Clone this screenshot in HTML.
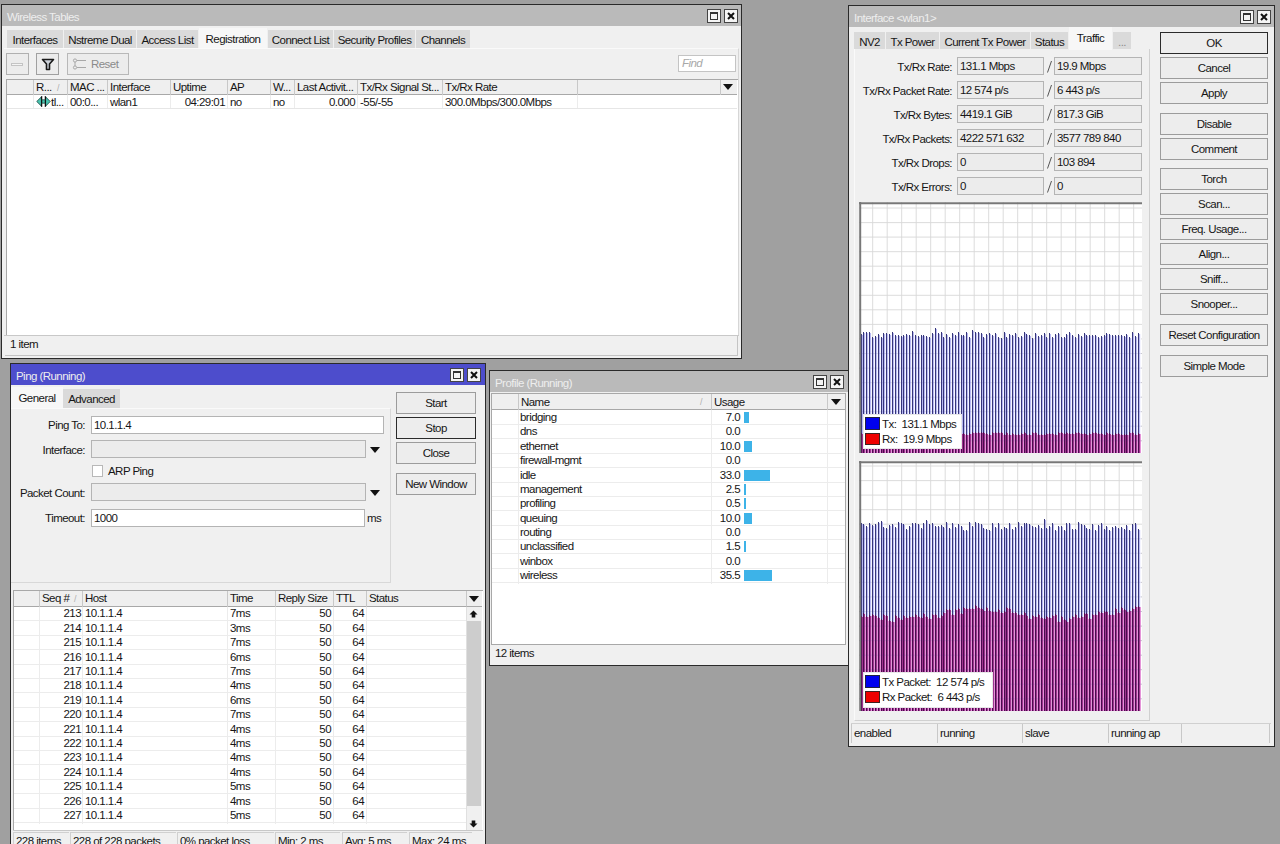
<!DOCTYPE html><html><head><meta charset="utf-8"><style>
html,body{margin:0;padding:0;}
body{width:1280px;height:844px;position:relative;overflow:hidden;background:#a0a0a0;font-family:"Liberation Sans", sans-serif;font-size:11.5px;color:#161616;}
.b{position:absolute;box-sizing:border-box;}
.t{position:absolute;white-space:nowrap;line-height:13px;letter-spacing:-0.55px;}
.wt{color:#eeeeee;}
.gt{color:#8a8a8a;}
</style></head><body>

<div class="b" style="left:1px;top:4px;width:741px;height:355px;background:#f0f0f0;border:1px solid #2a2a2a;"></div>
<div class="b" style="left:2px;top:5px;width:739px;height:21px;background:#bababa;"></div>
<div class="t wt" style="left:7px;top:11px;">Wireless Tables</div>
<div class="b" style="left:707px;top:9px;width:14px;height:14px;background:#f4f4f4;border:1px solid #444;"></div>
<div class="b" style="left:710px;top:12px;width:8px;height:8px;border:1px solid #333;border-top-width:2px;"></div>
<div class="b" style="left:724px;top:9px;width:14px;height:14px;background:#f4f4f4;border:1px solid #444;"></div>
<svg class="b" style="left:724px;top:9px" width="14" height="14"><path d="M4 4L10 10M10 4L4 10" stroke="#111" stroke-width="2"/></svg>
<div class="b" style="left:7px;top:30px;width:56px;height:18px;background:#dadada;"></div>
<div class="t " style="left:2.0px;width:66px;top:34px;text-align:center;">Interfaces</div>
<div class="b" style="left:64px;top:30px;width:72px;height:18px;background:#dadada;"></div>
<div class="t " style="left:59.0px;width:82px;top:34px;text-align:center;">Nstreme Dual</div>
<div class="b" style="left:137px;top:30px;width:61px;height:18px;background:#dadada;"></div>
<div class="t " style="left:132.0px;width:71px;top:34px;text-align:center;">Access List</div>
<div class="b" style="left:199px;top:28px;width:68px;height:21px;background:#f7f7f7;"></div>
<div class="t " style="left:194.0px;width:78px;top:33px;text-align:center;">Registration</div>
<div class="b" style="left:268px;top:30px;width:65px;height:18px;background:#dadada;"></div>
<div class="t " style="left:263.0px;width:75px;top:34px;text-align:center;">Connect List</div>
<div class="b" style="left:334px;top:30px;width:81px;height:18px;background:#dadada;"></div>
<div class="t " style="left:329.0px;width:91px;top:34px;text-align:center;">Security Profiles</div>
<div class="b" style="left:416px;top:30px;width:54px;height:18px;background:#dadada;"></div>
<div class="t " style="left:411.0px;width:64px;top:34px;text-align:center;">Channels</div>
<div class="b" style="left:4px;top:48px;width:735px;height:288px;border-top:1px solid #fafafa;border-right:1px solid #d6d6d6;"></div>
<div class="b" style="left:6px;top:53px;width:23px;height:22px;background:#ececec;border:1px solid #b0b0b0;"></div>
<div class="b" style="left:11px;top:63px;width:12px;height:3px;border:1px solid #c4c4c4;background:#f4f4f4;"></div>
<div class="b" style="left:36px;top:53px;width:23px;height:22px;background:#ececec;border:1px solid #a0a0a0;"></div>
<svg class="b" style="left:40px;top:56px" width="16" height="16"><path d="M2.5 3.5H13.5L9.5 8V13.5H6.5V8Z" fill="#cfd4dc" stroke="#1a1a1a" stroke-width="1.6" stroke-linejoin="round"/></svg>
<div class="b" style="left:67px;top:53px;width:62px;height:22px;background:#ececec;border:1px solid #b8b8b8;"></div>
<svg class="b" style="left:72px;top:57px" width="16" height="14"><g fill="none" stroke="#a8a8a8" stroke-width="1"><circle cx="3" cy="3.5" r="1.6"/><circle cx="3" cy="10.5" r="1.6"/><path d="M3 5V9M5 3.5H14M5 10.5H14"/></g></svg>
<div class="t gt" style="left:91px;top:58px;">Reset</div>
<div class="b" style="left:678px;top:55px;width:58px;height:17px;background:#fff;border:1px solid #c4c4c4;"></div>
<div class="t gt" style="left:682px;top:57px;color:#a8a8a8"><i>Find</i></div>
<div class="b" style="left:6px;top:79px;width:732px;height:256px;background:#fff;border-left:1px solid #a8a8a8;border-top:1px solid #a8a8a8;"></div>
<div class="b" style="left:7px;top:80px;width:730px;height:15px;background:#efefef;border-bottom:1px solid #a8a8a8;"></div>
<div class="b" style="left:33px;top:80px;width:1px;height:15px;background:#c8c8c8;"></div>
<div class="b" style="left:67px;top:80px;width:1px;height:15px;background:#c8c8c8;"></div>
<div class="b" style="left:107px;top:80px;width:1px;height:15px;background:#c8c8c8;"></div>
<div class="b" style="left:170px;top:80px;width:1px;height:15px;background:#c8c8c8;"></div>
<div class="b" style="left:227px;top:80px;width:1px;height:15px;background:#c8c8c8;"></div>
<div class="b" style="left:270px;top:80px;width:1px;height:15px;background:#c8c8c8;"></div>
<div class="b" style="left:294px;top:80px;width:1px;height:15px;background:#c8c8c8;"></div>
<div class="b" style="left:357px;top:80px;width:1px;height:15px;background:#c8c8c8;"></div>
<div class="b" style="left:442px;top:80px;width:1px;height:15px;background:#c8c8c8;"></div>
<div class="b" style="left:577px;top:80px;width:1px;height:15px;background:#c8c8c8;"></div>
<div class="b" style="left:720px;top:80px;width:1px;height:15px;background:#c8c8c8;"></div>
<div class="b" style="left:33px;top:95px;width:1px;height:14px;background:#ececec;"></div>
<div class="b" style="left:67px;top:95px;width:1px;height:14px;background:#ececec;"></div>
<div class="b" style="left:107px;top:95px;width:1px;height:14px;background:#ececec;"></div>
<div class="b" style="left:170px;top:95px;width:1px;height:14px;background:#ececec;"></div>
<div class="b" style="left:227px;top:95px;width:1px;height:14px;background:#ececec;"></div>
<div class="b" style="left:270px;top:95px;width:1px;height:14px;background:#ececec;"></div>
<div class="b" style="left:294px;top:95px;width:1px;height:14px;background:#ececec;"></div>
<div class="b" style="left:357px;top:95px;width:1px;height:14px;background:#ececec;"></div>
<div class="b" style="left:442px;top:95px;width:1px;height:14px;background:#ececec;"></div>
<div class="b" style="left:577px;top:95px;width:1px;height:14px;background:#ececec;"></div>
<div class="b" style="left:7px;top:108px;width:730px;height:1px;background:#e6e6e6;"></div>
<div class="t " style="left:36px;top:81px;">R... </div>
<div class="t " style="left:70px;top:81px;">MAC ...</div>
<div class="t " style="left:110px;top:81px;">Interface</div>
<div class="t " style="left:173px;top:81px;">Uptime</div>
<div class="t " style="left:230px;top:81px;">AP</div>
<div class="t " style="left:273px;top:81px;">W...</div>
<div class="t " style="left:297px;top:81px;">Last Activit...</div>
<div class="t " style="left:360px;top:81px;">Tx/Rx Signal St...</div>
<div class="t " style="left:445px;top:81px;">Tx/Rx Rate</div>
<div class="t gt" style="left:57px;top:82px;font-size:9px;color:#b0b0b0">/</div>
<svg class="b" style="left:722px;top:83px" width="12" height="8"><path d="M1 1H11L6 7Z" fill="#111"/></svg>
<svg class="b" style="left:36px;top:95px" width="15" height="13"><path d="M0.8 6.5L5.5 1.8V11.2ZM14.2 6.5L9.5 1.8V11.2Z" fill="#48c4b0" stroke="#1c5048" stroke-width="0.9" stroke-linejoin="round"/><rect x="5.5" y="4.8" width="4" height="3.4" fill="#48c4b0"/><path d="M5.6 1.2V11.8M9.4 1.2V11.8" stroke="#111" stroke-width="1.3"/><path d="M5.6 4.8H9.4M5.6 8.2H9.4" stroke="#1c5048" stroke-width="0.8"/></svg>
<div class="t " style="left:51px;top:96px;">tl...</div>
<div class="t " style="left:70px;top:96px;">00:0...</div>
<div class="t " style="left:110px;top:96px;">wlan1</div>
<div class="t " style="right:1055px;top:96px;text-align:right;">04:29:01</div>
<div class="t " style="left:230px;top:96px;">no</div>
<div class="t " style="left:273px;top:96px;">no</div>
<div class="t " style="right:925px;top:96px;text-align:right;">0.000</div>
<div class="t " style="left:360px;top:96px;">-55/-55</div>
<div class="t " style="left:445px;top:96px;">300.0Mbps/300.0Mbps</div>
<div class="b" style="left:4px;top:335px;width:735px;height:1px;background:#c8c8c8;"></div>
<div class="b" style="left:5px;top:336px;width:733px;height:20px;border-bottom:1px solid #c4c4c4;border-right:1px solid #c4c4c4;"></div>
<div class="t " style="left:10px;top:338px;">1 item</div>
<div class="b" style="left:489px;top:370px;width:360px;height:296px;background:#f0f0f0;border:1px solid #2a2a2a;"></div>
<div class="b" style="left:490px;top:371px;width:358px;height:21px;background:#bababa;"></div>
<div class="t wt" style="left:495px;top:377px;">Profile (Running)</div>
<div class="b" style="left:813px;top:375px;width:14px;height:14px;background:#f4f4f4;border:1px solid #444;"></div>
<div class="b" style="left:816px;top:378px;width:8px;height:8px;border:1px solid #333;border-top-width:2px;"></div>
<div class="b" style="left:830px;top:375px;width:14px;height:14px;background:#f4f4f4;border:1px solid #444;"></div>
<svg class="b" style="left:830px;top:375px" width="14" height="14"><path d="M4 4L10 10M10 4L4 10" stroke="#111" stroke-width="2"/></svg>
<div class="b" style="left:491px;top:393px;width:355px;height:252px;background:#fff;border:1px solid #a8a8a8;"></div>
<div class="b" style="left:492px;top:394px;width:353px;height:16px;background:#efefef;border-bottom:1px solid #a8a8a8;"></div>
<div class="b" style="left:518px;top:394px;width:1px;height:16px;background:#c8c8c8;"></div>
<div class="b" style="left:711px;top:394px;width:1px;height:16px;background:#c8c8c8;"></div>
<div class="b" style="left:827px;top:394px;width:1px;height:16px;background:#c8c8c8;"></div>
<div class="t " style="left:521px;top:396px;">Name</div>
<div class="t gt" style="left:700px;top:396px;font-size:9px;color:#b0b0b0">/</div>
<div class="t " style="left:714px;top:396px;">Usage</div>
<svg class="b" style="left:830px;top:398px" width="12" height="8"><path d="M1 1H11L6 7Z" fill="#111"/></svg>
<div class="b" style="left:492px;top:424.0px;width:353px;height:1.0px;background:#ececec;"></div>
<div class="t " style="left:520px;top:411.0px;">bridging</div>
<div class="t " style="right:540px;top:411.0px;text-align:right;">7.0</div>
<div class="b" style="left:744px;top:412.0px;width:4.5px;height:11.0px;background:#3db3e8;"></div>
<div class="b" style="left:492px;top:438.38px;width:353px;height:1.0px;background:#ececec;"></div>
<div class="t " style="left:520px;top:425.38px;">dns</div>
<div class="t " style="right:540px;top:425.38px;text-align:right;">0.0</div>
<div class="b" style="left:492px;top:452.76px;width:353px;height:1.0px;background:#ececec;"></div>
<div class="t " style="left:520px;top:439.76px;">ethernet</div>
<div class="t " style="right:540px;top:439.76px;text-align:right;">10.0</div>
<div class="b" style="left:744px;top:440.76px;width:7.600000000000023px;height:11.0px;background:#3db3e8;"></div>
<div class="b" style="left:492px;top:467.14px;width:353px;height:1.0px;background:#ececec;"></div>
<div class="t " style="left:520px;top:454.14px;">firewall-mgmt</div>
<div class="t " style="right:540px;top:454.14px;text-align:right;">0.0</div>
<div class="b" style="left:492px;top:481.52px;width:353px;height:1.0px;background:#ececec;"></div>
<div class="t " style="left:520px;top:468.52px;">idle</div>
<div class="t " style="right:540px;top:468.52px;text-align:right;">33.0</div>
<div class="b" style="left:744px;top:469.52px;width:26px;height:11.0px;background:#3db3e8;"></div>
<div class="b" style="left:492px;top:495.9px;width:353px;height:1.0px;background:#ececec;"></div>
<div class="t " style="left:520px;top:482.9px;">management</div>
<div class="t " style="right:540px;top:482.9px;text-align:right;">2.5</div>
<div class="b" style="left:744px;top:483.9px;width:2px;height:11.0px;background:#3db3e8;"></div>
<div class="b" style="left:492px;top:510.28px;width:353px;height:1.0px;background:#ececec;"></div>
<div class="t " style="left:520px;top:497.28px;">profiling</div>
<div class="t " style="right:540px;top:497.28px;text-align:right;">0.5</div>
<div class="b" style="left:744px;top:498.28px;width:2px;height:11.0px;background:#3db3e8;"></div>
<div class="b" style="left:492px;top:524.6600000000001px;width:353px;height:1.0px;background:#ececec;"></div>
<div class="t " style="left:520px;top:511.6600000000001px;">queuing</div>
<div class="t " style="right:540px;top:511.6600000000001px;text-align:right;">10.0</div>
<div class="b" style="left:744px;top:512.6600000000001px;width:7.600000000000023px;height:11.0px;background:#3db3e8;"></div>
<div class="b" style="left:492px;top:539.04px;width:353px;height:1.0px;background:#ececec;"></div>
<div class="t " style="left:520px;top:526.04px;">routing</div>
<div class="t " style="right:540px;top:526.04px;text-align:right;">0.0</div>
<div class="b" style="left:492px;top:553.4200000000001px;width:353px;height:1.0px;background:#ececec;"></div>
<div class="t " style="left:520px;top:540.4200000000001px;">unclassified</div>
<div class="t " style="right:540px;top:540.4200000000001px;text-align:right;">1.5</div>
<div class="b" style="left:744px;top:541.4200000000001px;width:2px;height:11.0px;background:#3db3e8;"></div>
<div class="b" style="left:492px;top:567.8px;width:353px;height:1.0px;background:#ececec;"></div>
<div class="t " style="left:520px;top:554.8px;">winbox</div>
<div class="t " style="right:540px;top:554.8px;text-align:right;">0.0</div>
<div class="b" style="left:492px;top:582.1800000000001px;width:353px;height:1.0px;background:#ececec;"></div>
<div class="t " style="left:520px;top:569.1800000000001px;">wireless</div>
<div class="t " style="right:540px;top:569.1800000000001px;text-align:right;">35.5</div>
<div class="b" style="left:744px;top:570.1800000000001px;width:28px;height:11.0px;background:#3db3e8;"></div>
<div class="b" style="left:518px;top:410px;width:1px;height:174px;background:#ececec;"></div>
<div class="b" style="left:711px;top:410px;width:1px;height:174px;background:#ececec;"></div>
<div class="b" style="left:827px;top:410px;width:1px;height:174px;background:#ececec;"></div>
<div class="t " style="left:495px;top:647px;">12 items</div>
<div class="b" style="left:10px;top:363px;width:476px;height:537px;background:#f0f0f0;border:1px solid #2a2a2a;"></div>
<div class="b" style="left:11px;top:364px;width:474px;height:21px;background:#4d4dcc;"></div>
<div class="t wt" style="left:16px;top:370px;">Ping (Running)</div>
<div class="b" style="left:450px;top:368px;width:14px;height:14px;background:#f4f4f4;border:1px solid #444;"></div>
<div class="b" style="left:453px;top:371px;width:8px;height:8px;border:1px solid #333;border-top-width:2px;"></div>
<div class="b" style="left:467px;top:368px;width:14px;height:14px;background:#f4f4f4;border:1px solid #444;"></div>
<svg class="b" style="left:467px;top:368px" width="14" height="14"><path d="M4 4L10 10M10 4L4 10" stroke="#111" stroke-width="2"/></svg>
<div class="b" style="left:11px;top:387px;width:52px;height:22px;background:#f7f7f7;"></div>
<div class="t " style="left:6.0px;width:62px;top:392px;text-align:center;">General</div>
<div class="b" style="left:63px;top:389px;width:57px;height:19px;background:#dadada;"></div>
<div class="t " style="left:58.0px;width:67px;top:393px;text-align:center;">Advanced</div>
<div class="b" style="left:11px;top:408px;width:380px;height:175px;border-right:1px solid #d8d8d8;border-bottom:1px solid #d8d8d8;border-top:1px solid #fafafa;"></div>
<div class="t " style="right:1195px;top:419px;text-align:right;">Ping To:</div>
<div class="b" style="left:91px;top:416px;width:293px;height:18px;background:#ffffff;border:1px solid #b4b4b4;"></div>
<div class="t " style="left:94px;top:419px;">10.1.1.4</div>
<div class="t " style="right:1195px;top:444px;text-align:right;">Interface:</div>
<div class="b" style="left:91px;top:440px;width:275px;height:18px;background:#ececec;border:1px solid #b4b4b4;"></div>
<svg class="b" style="left:369px;top:446px" width="12" height="8"><path d="M1 1H11L6 7Z" fill="#111"/></svg>
<div class="b" style="left:92px;top:465px;width:11px;height:12px;background:#fff;border:1px solid #b8b8b8;"></div>
<div class="t " style="left:108px;top:465px;">ARP Ping</div>
<div class="t " style="right:1195px;top:487px;text-align:right;">Packet Count:</div>
<div class="b" style="left:91px;top:483px;width:275px;height:18px;background:#ececec;border:1px solid #b4b4b4;"></div>
<svg class="b" style="left:369px;top:489px" width="12" height="8"><path d="M1 1H11L6 7Z" fill="#111"/></svg>
<div class="t " style="right:1195px;top:512px;text-align:right;">Timeout:</div>
<div class="b" style="left:91px;top:509px;width:274px;height:18px;background:#ffffff;border:1px solid #b4b4b4;"></div>
<div class="t " style="left:94px;top:512px;">1000</div>
<div class="t " style="left:367px;top:512px;">ms</div>
<div class="b" style="left:396px;top:392px;width:80px;height:22px;background:#ededed;border:1px solid #9c9c9c;"></div>
<div class="t " style="left:396.0px;width:80px;top:397px;text-align:center;">Start</div>
<div class="b" style="left:396px;top:417px;width:80px;height:22px;background:#ededed;border:1px solid #2b2b2b;"></div>
<div class="t " style="left:396.0px;width:80px;top:422px;text-align:center;">Stop</div>
<div class="b" style="left:396px;top:442px;width:80px;height:22px;background:#ededed;border:1px solid #9c9c9c;"></div>
<div class="t " style="left:396.0px;width:80px;top:447px;text-align:center;">Close</div>
<div class="b" style="left:396px;top:473px;width:80px;height:22px;background:#ededed;border:1px solid #9c9c9c;"></div>
<div class="t " style="left:396.0px;width:80px;top:478px;text-align:center;">New Window</div>
<div class="b" style="left:13px;top:590px;width:470px;height:241px;background:#fff;border-left:1px solid #a8a8a8;border-top:1px solid #a8a8a8;"></div>
<div class="b" style="left:14px;top:591px;width:452px;height:16px;background:#efefef;border-bottom:1px solid #a8a8a8;"></div>
<div class="b" style="left:466px;top:591px;width:16px;height:16px;background:#efefef;border-bottom:1px solid #a8a8a8;border-left:1px solid #c8c8c8;"></div>
<div class="b" style="left:39px;top:591px;width:1px;height:16px;background:#c8c8c8;"></div>
<div class="b" style="left:82px;top:591px;width:1px;height:16px;background:#c8c8c8;"></div>
<div class="b" style="left:227px;top:591px;width:1px;height:16px;background:#c8c8c8;"></div>
<div class="b" style="left:275px;top:591px;width:1px;height:16px;background:#c8c8c8;"></div>
<div class="b" style="left:333px;top:591px;width:1px;height:16px;background:#c8c8c8;"></div>
<div class="b" style="left:366px;top:591px;width:1px;height:16px;background:#c8c8c8;"></div>
<div class="t " style="left:42px;top:592px;">Seq #</div>
<div class="t gt" style="left:74px;top:593px;font-size:9px;color:#b0b0b0">/</div>
<div class="t " style="left:85px;top:592px;">Host</div>
<div class="t " style="left:230px;top:592px;">Time</div>
<div class="t " style="left:278px;top:592px;">Reply Size</div>
<div class="t " style="left:336px;top:592px;">TTL</div>
<div class="t " style="left:369px;top:592px;">Status</div>
<svg class="b" style="left:468px;top:595px" width="12" height="8"><path d="M1 1H11L6 7Z" fill="#111"/></svg>
<div class="b" style="left:14px;top:620.3px;width:452px;height:1.0px;background:#ececec;"></div>
<div class="t " style="right:1199px;top:607.3px;text-align:right;">213</div>
<div class="t " style="left:85px;top:607.3px;">10.1.1.4</div>
<div class="t " style="left:230px;top:607.3px;">7ms</div>
<div class="t " style="right:949px;top:607.3px;text-align:right;">50</div>
<div class="t " style="right:916px;top:607.3px;text-align:right;">64</div>
<div class="b" style="left:14px;top:634.6999999999999px;width:452px;height:1.0px;background:#ececec;"></div>
<div class="t " style="right:1199px;top:621.6999999999999px;text-align:right;">214</div>
<div class="t " style="left:85px;top:621.6999999999999px;">10.1.1.4</div>
<div class="t " style="left:230px;top:621.6999999999999px;">3ms</div>
<div class="t " style="right:949px;top:621.6999999999999px;text-align:right;">50</div>
<div class="t " style="right:916px;top:621.6999999999999px;text-align:right;">64</div>
<div class="b" style="left:14px;top:649.0999999999999px;width:452px;height:1.0px;background:#ececec;"></div>
<div class="t " style="right:1199px;top:636.0999999999999px;text-align:right;">215</div>
<div class="t " style="left:85px;top:636.0999999999999px;">10.1.1.4</div>
<div class="t " style="left:230px;top:636.0999999999999px;">7ms</div>
<div class="t " style="right:949px;top:636.0999999999999px;text-align:right;">50</div>
<div class="t " style="right:916px;top:636.0999999999999px;text-align:right;">64</div>
<div class="b" style="left:14px;top:663.5px;width:452px;height:1.0px;background:#ececec;"></div>
<div class="t " style="right:1199px;top:650.5px;text-align:right;">216</div>
<div class="t " style="left:85px;top:650.5px;">10.1.1.4</div>
<div class="t " style="left:230px;top:650.5px;">6ms</div>
<div class="t " style="right:949px;top:650.5px;text-align:right;">50</div>
<div class="t " style="right:916px;top:650.5px;text-align:right;">64</div>
<div class="b" style="left:14px;top:677.9px;width:452px;height:1.0px;background:#ececec;"></div>
<div class="t " style="right:1199px;top:664.9px;text-align:right;">217</div>
<div class="t " style="left:85px;top:664.9px;">10.1.1.4</div>
<div class="t " style="left:230px;top:664.9px;">7ms</div>
<div class="t " style="right:949px;top:664.9px;text-align:right;">50</div>
<div class="t " style="right:916px;top:664.9px;text-align:right;">64</div>
<div class="b" style="left:14px;top:692.3px;width:452px;height:1.0px;background:#ececec;"></div>
<div class="t " style="right:1199px;top:679.3px;text-align:right;">218</div>
<div class="t " style="left:85px;top:679.3px;">10.1.1.4</div>
<div class="t " style="left:230px;top:679.3px;">4ms</div>
<div class="t " style="right:949px;top:679.3px;text-align:right;">50</div>
<div class="t " style="right:916px;top:679.3px;text-align:right;">64</div>
<div class="b" style="left:14px;top:706.6999999999999px;width:452px;height:1.0px;background:#ececec;"></div>
<div class="t " style="right:1199px;top:693.6999999999999px;text-align:right;">219</div>
<div class="t " style="left:85px;top:693.6999999999999px;">10.1.1.4</div>
<div class="t " style="left:230px;top:693.6999999999999px;">6ms</div>
<div class="t " style="right:949px;top:693.6999999999999px;text-align:right;">50</div>
<div class="t " style="right:916px;top:693.6999999999999px;text-align:right;">64</div>
<div class="b" style="left:14px;top:721.0999999999999px;width:452px;height:1.0px;background:#ececec;"></div>
<div class="t " style="right:1199px;top:708.0999999999999px;text-align:right;">220</div>
<div class="t " style="left:85px;top:708.0999999999999px;">10.1.1.4</div>
<div class="t " style="left:230px;top:708.0999999999999px;">7ms</div>
<div class="t " style="right:949px;top:708.0999999999999px;text-align:right;">50</div>
<div class="t " style="right:916px;top:708.0999999999999px;text-align:right;">64</div>
<div class="b" style="left:14px;top:735.5px;width:452px;height:1.0px;background:#ececec;"></div>
<div class="t " style="right:1199px;top:722.5px;text-align:right;">221</div>
<div class="t " style="left:85px;top:722.5px;">10.1.1.4</div>
<div class="t " style="left:230px;top:722.5px;">4ms</div>
<div class="t " style="right:949px;top:722.5px;text-align:right;">50</div>
<div class="t " style="right:916px;top:722.5px;text-align:right;">64</div>
<div class="b" style="left:14px;top:749.9px;width:452px;height:1.0px;background:#ececec;"></div>
<div class="t " style="right:1199px;top:736.9px;text-align:right;">222</div>
<div class="t " style="left:85px;top:736.9px;">10.1.1.4</div>
<div class="t " style="left:230px;top:736.9px;">4ms</div>
<div class="t " style="right:949px;top:736.9px;text-align:right;">50</div>
<div class="t " style="right:916px;top:736.9px;text-align:right;">64</div>
<div class="b" style="left:14px;top:764.3px;width:452px;height:1.0px;background:#ececec;"></div>
<div class="t " style="right:1199px;top:751.3px;text-align:right;">223</div>
<div class="t " style="left:85px;top:751.3px;">10.1.1.4</div>
<div class="t " style="left:230px;top:751.3px;">4ms</div>
<div class="t " style="right:949px;top:751.3px;text-align:right;">50</div>
<div class="t " style="right:916px;top:751.3px;text-align:right;">64</div>
<div class="b" style="left:14px;top:778.6999999999999px;width:452px;height:1.0px;background:#ececec;"></div>
<div class="t " style="right:1199px;top:765.6999999999999px;text-align:right;">224</div>
<div class="t " style="left:85px;top:765.6999999999999px;">10.1.1.4</div>
<div class="t " style="left:230px;top:765.6999999999999px;">4ms</div>
<div class="t " style="right:949px;top:765.6999999999999px;text-align:right;">50</div>
<div class="t " style="right:916px;top:765.6999999999999px;text-align:right;">64</div>
<div class="b" style="left:14px;top:793.0999999999999px;width:452px;height:1.0px;background:#ececec;"></div>
<div class="t " style="right:1199px;top:780.0999999999999px;text-align:right;">225</div>
<div class="t " style="left:85px;top:780.0999999999999px;">10.1.1.4</div>
<div class="t " style="left:230px;top:780.0999999999999px;">5ms</div>
<div class="t " style="right:949px;top:780.0999999999999px;text-align:right;">50</div>
<div class="t " style="right:916px;top:780.0999999999999px;text-align:right;">64</div>
<div class="b" style="left:14px;top:807.5px;width:452px;height:1.0px;background:#ececec;"></div>
<div class="t " style="right:1199px;top:794.5px;text-align:right;">226</div>
<div class="t " style="left:85px;top:794.5px;">10.1.1.4</div>
<div class="t " style="left:230px;top:794.5px;">4ms</div>
<div class="t " style="right:949px;top:794.5px;text-align:right;">50</div>
<div class="t " style="right:916px;top:794.5px;text-align:right;">64</div>
<div class="b" style="left:14px;top:821.9px;width:452px;height:1.0px;background:#ececec;"></div>
<div class="t " style="right:1199px;top:808.9px;text-align:right;">227</div>
<div class="t " style="left:85px;top:808.9px;">10.1.1.4</div>
<div class="t " style="left:230px;top:808.9px;">5ms</div>
<div class="t " style="right:949px;top:808.9px;text-align:right;">50</div>
<div class="t " style="right:916px;top:808.9px;text-align:right;">64</div>
<div class="b" style="left:39px;top:607px;width:1px;height:217px;background:#ececec;"></div>
<div class="b" style="left:82px;top:607px;width:1px;height:217px;background:#ececec;"></div>
<div class="b" style="left:227px;top:607px;width:1px;height:217px;background:#ececec;"></div>
<div class="b" style="left:275px;top:607px;width:1px;height:217px;background:#ececec;"></div>
<div class="b" style="left:333px;top:607px;width:1px;height:217px;background:#ececec;"></div>
<div class="b" style="left:366px;top:607px;width:1px;height:217px;background:#ececec;"></div>
<div class="b" style="left:466px;top:607px;width:16px;height:223px;background:#f0f0f0;border-left:1px solid #e0e0e0;"></div>
<div class="b" style="left:467px;top:621px;width:14px;height:185px;background:#cdcdcd;"></div>
<svg class="b" style="left:469px;top:610px" width="9" height="9"><path d="M4.5 0.5L8.5 4.5H6.3V7.5H2.7V4.5H0.5Z" fill="#111"/></svg>
<svg class="b" style="left:469px;top:819px" width="9" height="9"><path d="M4.5 8.5L8.5 4.5H6.3V1.5H2.7V4.5H0.5Z" fill="#111"/></svg>
<div class="b" style="left:13px;top:830px;width:470px;height:1px;background:#c8c8c8;"></div>
<div class="b" style="left:13px;top:832px;width:56px;height:18px;border-left:1px solid #d0d0d0;border-top:1px solid #d0d0d0;"></div>
<div class="t " style="left:16px;top:835px;">228 items</div>
<div class="b" style="left:70px;top:832px;width:106px;height:18px;border-left:1px solid #d0d0d0;border-top:1px solid #d0d0d0;"></div>
<div class="t " style="left:73px;top:835px;">228 of 228 packets</div>
<div class="b" style="left:177px;top:832px;width:97px;height:18px;border-left:1px solid #d0d0d0;border-top:1px solid #d0d0d0;"></div>
<div class="t " style="left:180px;top:835px;">0% packet loss</div>
<div class="b" style="left:275px;top:832px;width:65px;height:18px;border-left:1px solid #d0d0d0;border-top:1px solid #d0d0d0;"></div>
<div class="t " style="left:278px;top:835px;">Min: 2 ms</div>
<div class="b" style="left:342px;top:832px;width:65px;height:18px;border-left:1px solid #d0d0d0;border-top:1px solid #d0d0d0;"></div>
<div class="t " style="left:345px;top:835px;">Avg: 5 ms</div>
<div class="b" style="left:409px;top:832px;width:63px;height:18px;border-left:1px solid #d0d0d0;border-top:1px solid #d0d0d0;"></div>
<div class="t " style="left:412px;top:835px;">Max: 24 ms</div>
<div class="b" style="left:848px;top:5px;width:427px;height:742px;background:#f0f0f0;border:1px solid #2a2a2a;"></div>
<div class="b" style="left:849px;top:6px;width:425px;height:21px;background:#bababa;"></div>
<div class="t wt" style="left:854px;top:12px;">Interface &lt;wlan1&gt;</div>
<div class="b" style="left:1240px;top:10px;width:14px;height:14px;background:#f4f4f4;border:1px solid #444;"></div>
<div class="b" style="left:1243px;top:13px;width:8px;height:8px;border:1px solid #333;border-top-width:2px;"></div>
<div class="b" style="left:1257px;top:10px;width:14px;height:14px;background:#f4f4f4;border:1px solid #444;"></div>
<svg class="b" style="left:1257px;top:10px" width="14" height="14"><path d="M4 4L10 10M10 4L4 10" stroke="#111" stroke-width="2"/></svg>
<div class="b" style="left:854px;top:32px;width:31px;height:17px;background:#dadada;"></div>
<div class="t " style="left:849.0px;width:41px;top:36px;text-align:center;">NV2</div>
<div class="b" style="left:886px;top:32px;width:53px;height:17px;background:#dadada;"></div>
<div class="t " style="left:881.0px;width:63px;top:36px;text-align:center;">Tx Power</div>
<div class="b" style="left:940px;top:32px;width:90px;height:17px;background:#dadada;"></div>
<div class="t " style="left:935.0px;width:100px;top:36px;text-align:center;">Current Tx Power</div>
<div class="b" style="left:1031px;top:32px;width:37px;height:17px;background:#dadada;"></div>
<div class="t " style="left:1026.0px;width:47px;top:36px;text-align:center;">Status</div>
<div class="b" style="left:1069px;top:27px;width:43px;height:23px;background:#f7f7f7;"></div>
<div class="t " style="left:1064.0px;width:53px;top:32px;text-align:center;">Traffic</div>
<div class="b" style="left:1113px;top:32px;width:18px;height:17px;background:#dadada;"></div>
<div class="t " style="left:1108.0px;width:28px;top:36px;text-align:center;"><span style="color:#8c8c8c">...</span></div>
<div class="b" style="left:854px;top:49px;width:296px;height:672px;border-left:1px solid #fafafa;border-right:1px solid #d0d0d0;border-bottom:1px solid #d0d0d0;"></div>
<div class="t " style="right:328px;top:61px;text-align:right;">Tx/Rx Rate:</div>
<div class="b" style="left:957px;top:57px;width:87px;height:18px;background:#ececec;border:1px solid #b4b4b4;"></div>
<div class="t " style="left:960px;top:60px;">131.1 Mbps</div>
<svg class="b" style="left:1046px;top:60px" width="7" height="13"><path d="M1.5 12.5L5.5 1" stroke="#555" stroke-width="1"/></svg>
<div class="b" style="left:1054px;top:57px;width:88px;height:18px;background:#ececec;border:1px solid #b4b4b4;"></div>
<div class="t " style="left:1057px;top:60px;">19.9 Mbps</div>
<div class="t " style="right:328px;top:85px;text-align:right;">Tx/Rx Packet Rate:</div>
<div class="b" style="left:957px;top:81px;width:87px;height:18px;background:#ececec;border:1px solid #b4b4b4;"></div>
<div class="t " style="left:960px;top:84px;">12 574 p/s</div>
<svg class="b" style="left:1046px;top:84px" width="7" height="13"><path d="M1.5 12.5L5.5 1" stroke="#555" stroke-width="1"/></svg>
<div class="b" style="left:1054px;top:81px;width:88px;height:18px;background:#ececec;border:1px solid #b4b4b4;"></div>
<div class="t " style="left:1057px;top:84px;">6 443 p/s</div>
<div class="t " style="right:328px;top:109px;text-align:right;">Tx/Rx Bytes:</div>
<div class="b" style="left:957px;top:105px;width:87px;height:18px;background:#ececec;border:1px solid #b4b4b4;"></div>
<div class="t " style="left:960px;top:108px;">4419.1 GiB</div>
<svg class="b" style="left:1046px;top:108px" width="7" height="13"><path d="M1.5 12.5L5.5 1" stroke="#555" stroke-width="1"/></svg>
<div class="b" style="left:1054px;top:105px;width:88px;height:18px;background:#ececec;border:1px solid #b4b4b4;"></div>
<div class="t " style="left:1057px;top:108px;">817.3 GiB</div>
<div class="t " style="right:328px;top:133px;text-align:right;">Tx/Rx Packets:</div>
<div class="b" style="left:957px;top:129px;width:87px;height:18px;background:#ececec;border:1px solid #b4b4b4;"></div>
<div class="t " style="left:960px;top:132px;">4222 571 632</div>
<svg class="b" style="left:1046px;top:132px" width="7" height="13"><path d="M1.5 12.5L5.5 1" stroke="#555" stroke-width="1"/></svg>
<div class="b" style="left:1054px;top:129px;width:88px;height:18px;background:#ececec;border:1px solid #b4b4b4;"></div>
<div class="t " style="left:1057px;top:132px;">3577 789 840</div>
<div class="t " style="right:328px;top:157px;text-align:right;">Tx/Rx Drops:</div>
<div class="b" style="left:957px;top:153px;width:87px;height:18px;background:#ececec;border:1px solid #b4b4b4;"></div>
<div class="t " style="left:960px;top:156px;">0</div>
<svg class="b" style="left:1046px;top:156px" width="7" height="13"><path d="M1.5 12.5L5.5 1" stroke="#555" stroke-width="1"/></svg>
<div class="b" style="left:1054px;top:153px;width:88px;height:18px;background:#ececec;border:1px solid #b4b4b4;"></div>
<div class="t " style="left:1057px;top:156px;">103 894</div>
<div class="t " style="right:328px;top:181px;text-align:right;">Tx/Rx Errors:</div>
<div class="b" style="left:957px;top:177px;width:87px;height:18px;background:#ececec;border:1px solid #b4b4b4;"></div>
<div class="t " style="left:960px;top:180px;">0</div>
<svg class="b" style="left:1046px;top:180px" width="7" height="13"><path d="M1.5 12.5L5.5 1" stroke="#555" stroke-width="1"/></svg>
<div class="b" style="left:1054px;top:177px;width:88px;height:18px;background:#ececec;border:1px solid #b4b4b4;"></div>
<div class="t " style="left:1057px;top:180px;">0</div>
<div class="b" style="left:1160px;top:32px;width:108px;height:22px;background:#ededed;border:1px solid #2b2b2b;"></div>
<div class="t " style="left:1160.0px;width:108px;top:37px;text-align:center;">OK</div>
<div class="b" style="left:1160px;top:57px;width:108px;height:22px;background:#ededed;border:1px solid #9c9c9c;"></div>
<div class="t " style="left:1160.0px;width:108px;top:62px;text-align:center;">Cancel</div>
<div class="b" style="left:1160px;top:82px;width:108px;height:22px;background:#ededed;border:1px solid #9c9c9c;"></div>
<div class="t " style="left:1160.0px;width:108px;top:87px;text-align:center;">Apply</div>
<div class="b" style="left:1160px;top:113px;width:108px;height:22px;background:#ededed;border:1px solid #9c9c9c;"></div>
<div class="t " style="left:1160.0px;width:108px;top:118px;text-align:center;">Disable</div>
<div class="b" style="left:1160px;top:138px;width:108px;height:22px;background:#ededed;border:1px solid #9c9c9c;"></div>
<div class="t " style="left:1160.0px;width:108px;top:143px;text-align:center;">Comment</div>
<div class="b" style="left:1160px;top:168px;width:108px;height:22px;background:#ededed;border:1px solid #9c9c9c;"></div>
<div class="t " style="left:1160.0px;width:108px;top:173px;text-align:center;">Torch</div>
<div class="b" style="left:1160px;top:193px;width:108px;height:22px;background:#ededed;border:1px solid #9c9c9c;"></div>
<div class="t " style="left:1160.0px;width:108px;top:198px;text-align:center;">Scan...</div>
<div class="b" style="left:1160px;top:218px;width:108px;height:22px;background:#ededed;border:1px solid #9c9c9c;"></div>
<div class="t " style="left:1160.0px;width:108px;top:223px;text-align:center;">Freq. Usage...</div>
<div class="b" style="left:1160px;top:243px;width:108px;height:22px;background:#ededed;border:1px solid #9c9c9c;"></div>
<div class="t " style="left:1160.0px;width:108px;top:248px;text-align:center;">Align...</div>
<div class="b" style="left:1160px;top:268px;width:108px;height:22px;background:#ededed;border:1px solid #9c9c9c;"></div>
<div class="t " style="left:1160.0px;width:108px;top:273px;text-align:center;">Sniff...</div>
<div class="b" style="left:1160px;top:293px;width:108px;height:22px;background:#ededed;border:1px solid #9c9c9c;"></div>
<div class="t " style="left:1160.0px;width:108px;top:298px;text-align:center;">Snooper...</div>
<div class="b" style="left:1160px;top:324px;width:108px;height:22px;background:#ededed;border:1px solid #9c9c9c;"></div>
<div class="t " style="left:1160.0px;width:108px;top:329px;text-align:center;">Reset Configuration</div>
<div class="b" style="left:1160px;top:355px;width:108px;height:22px;background:#ededed;border:1px solid #9c9c9c;"></div>
<div class="t " style="left:1160.0px;width:108px;top:360px;text-align:center;">Simple Mode</div>
<svg class="b" style="left:859px;top:202px" width="283" height="251" shape-rendering="auto"><rect x="0" y="0" width="283" height="251" fill="#fff"/><path d="M13.7 0V251M28.2 0V251M42.7 0V251M57.2 0V251M71.7 0V251M86.2 0V251M100.7 0V251M115.2 0V251M129.7 0V251M144.2 0V251M158.7 0V251M173.2 0V251M187.7 0V251M202.2 0V251M216.7 0V251M231.2 0V251M245.7 0V251M260.2 0V251M274.7 0V251M0 238.8H283M0 224.2H283M0 209.7H283M0 195.2H283M0 180.6H283M0 166.1H283M0 151.5H283M0 136.9H283M0 122.4H283M0 107.8H283M0 93.3H283M0 78.8H283M0 64.2H283M0 49.7H283M0 35.1H283M0 20.6H283M0 6.0H283" stroke="#d8d8d8" stroke-width="0.9" fill="none"/><g shape-rendering="crispEdges"><path d="M2 133H4V251H2ZM4 131H7V251H4ZM7 131H10V251H7ZM10 136H13V251H10ZM13 136H16V251H13ZM16 135H19V251H16ZM19 136H22V251H19ZM22 136H24V251H22ZM24 132H27V251H24ZM27 133H30V251H27ZM30 133H33V251H30ZM33 134H36V251H33ZM36 134H39V251H36ZM39 135H42V251H39ZM42 135H44V251H42ZM44 134H47V251H44ZM47 134H50V251H47ZM50 134H53V251H50ZM53 134H56V251H53ZM56 135H59V251H56ZM59 135H62V251H59ZM62 134H64V251H62ZM64 135H67V251H64ZM67 136H70V251H67ZM70 136H73V251H70ZM73 132H76V251H73ZM76 132H79V251H76ZM79 132H82V251H79ZM82 136H84V251H82ZM84 136H87V251H84ZM87 136H90V251H87ZM90 136H93V251H90ZM93 134H96V251H93ZM96 134H99V251H96ZM99 134H102V251H99ZM102 134H104V251H102ZM104 134H107V251H104ZM107 136H110V251H107ZM110 136H113V251H110ZM113 131H116V251H113ZM116 131H119V251H116ZM119 132H122V251H119ZM122 136H124V251H122ZM124 136H127V251H124ZM127 133H130V251H127ZM130 134H133V251H130ZM133 134H136V251H133ZM136 136H139V251H136ZM139 137H142V251H139ZM142 137H145V251H142ZM145 136H147V251H145ZM147 136H150V251H147ZM150 134H153V251H150ZM153 134H156V251H153ZM156 136H159V251H156ZM159 136H162V251H159ZM162 135H165V251H162ZM165 133H167V251H165ZM167 134H170V251H167ZM170 137H173V251H170ZM173 137H176V251H173ZM176 135H179V251H176ZM179 135H182V251H179ZM182 134H185V251H182ZM185 136H187V251H185ZM187 136H190V251H187ZM190 136H193V251H190ZM193 136H196V251H193ZM196 133H199V251H196ZM199 136H202V251H199ZM202 136H205V251H202ZM205 136H207V251H205ZM207 133H210V251H207ZM210 134H213V251H210ZM213 136H216V251H213ZM216 136H219V251H216ZM219 135H222V251H219ZM222 135H225V251H222ZM225 134H227V251H225ZM227 134H230V251H227ZM230 134H233V251H230ZM233 134H236V251H233ZM236 136H239V251H236ZM239 136H242V251H239ZM242 135H245V251H242ZM245 134H247V251H245ZM247 133H250V251H247ZM250 134H253V251H250ZM253 134H256V251H253ZM256 134H259V251H256ZM259 134H262V251H259ZM262 135H265V251H262ZM265 135H267V251H265ZM267 136H270V251H267ZM270 136H273V251H270ZM273 135H276V251H273ZM276 135H279V251H276ZM279 132H282V251H279Z" fill="#f4f4ff"/><path d="M3 133h1V251h-1ZM5 131h1V251h-1ZM8 131h1V251h-1ZM11 131h1V251h-1ZM14 136h1V251h-1ZM17 135h1V251h-1ZM20 133h1V251h-1ZM23 136h1V251h-1ZM25 132h1V251h-1ZM28 132h1V251h-1ZM31 133h1V251h-1ZM34 131h1V251h-1ZM37 134h1V251h-1ZM40 134h1V251h-1ZM43 135h1V251h-1ZM45 134h1V251h-1ZM48 133h1V251h-1ZM51 134h1V251h-1ZM54 130h1V251h-1ZM57 134h1V251h-1ZM60 135h1V251h-1ZM63 134h1V251h-1ZM65 134h1V251h-1ZM68 135h1V251h-1ZM71 136h1V251h-1ZM74 132h1V251h-1ZM77 127h1V251h-1ZM80 132h1V251h-1ZM83 131h1V251h-1ZM85 136h1V251h-1ZM88 133h1V251h-1ZM91 136h1V251h-1ZM94 132h1V251h-1ZM97 134h1V251h-1ZM100 131h1V251h-1ZM103 134h1V251h-1ZM105 134h1V251h-1ZM108 131h1V251h-1ZM111 136h1V251h-1ZM114 129h1V251h-1ZM117 131h1V251h-1ZM120 131h1V251h-1ZM123 132h1V251h-1ZM125 136h1V251h-1ZM128 133h1V251h-1ZM131 132h1V251h-1ZM134 134h1V251h-1ZM137 132h1V251h-1ZM140 136h1V251h-1ZM143 137h1V251h-1ZM146 131h1V251h-1ZM148 136h1V251h-1ZM151 133h1V251h-1ZM154 134h1V251h-1ZM157 132h1V251h-1ZM160 136h1V251h-1ZM163 135h1V251h-1ZM166 131h1V251h-1ZM168 133h1V251h-1ZM171 134h1V251h-1ZM174 137h1V251h-1ZM177 132h1V251h-1ZM180 135h1V251h-1ZM183 134h1V251h-1ZM186 132h1V251h-1ZM188 136h1V251h-1ZM191 132h1V251h-1ZM194 136h1V251h-1ZM197 133h1V251h-1ZM200 132h1V251h-1ZM203 136h1V251h-1ZM206 136h1V251h-1ZM208 133h1V251h-1ZM211 131h1V251h-1ZM214 134h1V251h-1ZM217 136h1V251h-1ZM220 133h1V251h-1ZM223 135h1V251h-1ZM226 132h1V251h-1ZM228 134h1V251h-1ZM231 134h1V251h-1ZM234 134h1V251h-1ZM237 134h1V251h-1ZM240 136h1V251h-1ZM243 135h1V251h-1ZM246 134h1V251h-1ZM248 132h1V251h-1ZM251 133h1V251h-1ZM254 134h1V251h-1ZM257 134h1V251h-1ZM260 134h1V251h-1ZM263 134h1V251h-1ZM266 135h1V251h-1ZM268 133h1V251h-1ZM271 136h1V251h-1ZM274 131h1V251h-1ZM277 135h1V251h-1ZM280 132h1V251h-1Z" fill="#b8b8f2"/><path d="M2 132h1V251h-1ZM4 130h1V251h-1ZM7 130h1V251h-1ZM10 130h1V251h-1ZM13 135h1V251h-1ZM16 134h1V251h-1ZM19 132h1V251h-1ZM22 135h1V251h-1ZM24 131h1V251h-1ZM27 131h1V251h-1ZM30 132h1V251h-1ZM33 130h1V251h-1ZM36 133h1V251h-1ZM39 133h1V251h-1ZM42 134h1V251h-1ZM44 133h1V251h-1ZM47 132h1V251h-1ZM50 133h1V251h-1ZM53 129h1V251h-1ZM56 133h1V251h-1ZM59 134h1V251h-1ZM62 133h1V251h-1ZM64 133h1V251h-1ZM67 134h1V251h-1ZM70 135h1V251h-1ZM73 131h1V251h-1ZM76 126h1V251h-1ZM79 131h1V251h-1ZM82 130h1V251h-1ZM84 135h1V251h-1ZM87 132h1V251h-1ZM90 135h1V251h-1ZM93 131h1V251h-1ZM96 133h1V251h-1ZM99 130h1V251h-1ZM102 133h1V251h-1ZM104 133h1V251h-1ZM107 130h1V251h-1ZM110 135h1V251h-1ZM113 128h1V251h-1ZM116 130h1V251h-1ZM119 130h1V251h-1ZM122 131h1V251h-1ZM124 135h1V251h-1ZM127 132h1V251h-1ZM130 131h1V251h-1ZM133 133h1V251h-1ZM136 131h1V251h-1ZM139 135h1V251h-1ZM142 136h1V251h-1ZM145 130h1V251h-1ZM147 135h1V251h-1ZM150 132h1V251h-1ZM153 133h1V251h-1ZM156 131h1V251h-1ZM159 135h1V251h-1ZM162 134h1V251h-1ZM165 130h1V251h-1ZM167 132h1V251h-1ZM170 133h1V251h-1ZM173 136h1V251h-1ZM176 131h1V251h-1ZM179 134h1V251h-1ZM182 133h1V251h-1ZM185 131h1V251h-1ZM187 135h1V251h-1ZM190 131h1V251h-1ZM193 135h1V251h-1ZM196 132h1V251h-1ZM199 131h1V251h-1ZM202 135h1V251h-1ZM205 135h1V251h-1ZM207 132h1V251h-1ZM210 130h1V251h-1ZM213 133h1V251h-1ZM216 135h1V251h-1ZM219 132h1V251h-1ZM222 134h1V251h-1ZM225 131h1V251h-1ZM227 133h1V251h-1ZM230 133h1V251h-1ZM233 133h1V251h-1ZM236 133h1V251h-1ZM239 135h1V251h-1ZM242 134h1V251h-1ZM245 133h1V251h-1ZM247 131h1V251h-1ZM250 132h1V251h-1ZM253 133h1V251h-1ZM256 133h1V251h-1ZM259 133h1V251h-1ZM262 133h1V251h-1ZM265 134h1V251h-1ZM267 132h1V251h-1ZM270 135h1V251h-1ZM273 130h1V251h-1ZM276 134h1V251h-1ZM279 131h1V251h-1Z" fill="#36367a"/><path d="M2 232H4V251H2ZM4 232H7V251H4ZM7 232H10V251H7ZM10 232H13V251H10ZM13 232H16V251H13ZM16 232H19V251H16ZM19 231H22V251H19ZM22 233H24V251H22ZM24 233H27V251H24ZM27 232H30V251H27ZM30 232H33V251H30ZM33 232H36V251H33ZM36 233H39V251H36ZM39 233H42V251H39ZM42 233H44V251H42ZM44 233H47V251H44ZM47 231H50V251H47ZM50 233H53V251H50ZM53 233H56V251H53ZM56 232H59V251H56ZM59 233H62V251H59ZM62 233H64V251H62ZM64 233H67V251H64ZM67 233H70V251H67ZM70 232H73V251H70ZM73 231H76V251H73ZM76 233H79V251H76ZM79 233H82V251H79ZM82 233H84V251H82ZM84 233H87V251H84ZM87 232H90V251H87ZM90 231H93V251H90ZM93 231H96V251H93ZM96 232H99V251H96ZM99 232H102V251H99ZM102 232H104V251H102ZM104 233H107V251H104ZM107 233H110V251H107ZM110 232H113V251H110ZM113 231H116V251H113ZM116 231H119V251H116ZM119 231H122V251H119ZM122 231H124V251H122ZM124 232H127V251H124ZM127 233H130V251H127ZM130 233H133V251H130ZM133 231H136V251H133ZM136 231H139V251H136ZM139 231H142V251H139ZM142 233H145V251H142ZM145 233H147V251H145ZM147 233H150V251H147ZM150 233H153V251H150ZM153 233H156V251H153ZM156 233H159V251H156ZM159 233H162V251H159ZM162 232H165V251H162ZM165 233H167V251H165ZM167 233H170V251H167ZM170 233H173V251H170ZM173 231H176V251H173ZM176 233H179V251H176ZM179 233H182V251H179ZM182 233H185V251H182ZM185 233H187V251H185ZM187 232H190V251H187ZM190 232H193V251H190ZM193 233H196V251H193ZM196 233H199V251H196ZM199 231H202V251H199ZM202 232H205V251H202ZM205 232H207V251H205ZM207 232H210V251H207ZM210 232H213V251H210ZM213 232H216V251H213ZM216 231H219V251H216ZM219 232H222V251H219ZM222 232H225V251H222ZM225 233H227V251H225ZM227 233H230V251H227ZM230 232H233V251H230ZM233 231H236V251H233ZM236 232H239V251H236ZM239 232H242V251H239ZM242 233H245V251H242ZM245 233H247V251H245ZM247 232H250V251H247ZM250 233H253V251H250ZM253 233H256V251H253ZM256 232H259V251H256ZM259 233H262V251H259ZM262 233H265V251H262ZM265 233H267V251H265ZM267 233H270V251H267ZM270 231H273V251H270ZM273 233H276V251H273ZM276 233H279V251H276ZM279 232H282V251H279Z" fill="#e494d8"/><path d="M3 232h1V251h-1ZM5 232h1V251h-1ZM8 231h1V251h-1ZM11 232h1V251h-1ZM14 231h1V251h-1ZM17 232h1V251h-1ZM20 231h1V251h-1ZM23 231h1V251h-1ZM25 233h1V251h-1ZM28 232h1V251h-1ZM31 231h1V251h-1ZM34 232h1V251h-1ZM37 232h1V251h-1ZM40 233h1V251h-1ZM43 232h1V251h-1ZM45 233h1V251h-1ZM48 231h1V251h-1ZM51 231h1V251h-1ZM54 233h1V251h-1ZM57 232h1V251h-1ZM60 232h1V251h-1ZM63 233h1V251h-1ZM65 231h1V251h-1ZM68 233h1V251h-1ZM71 232h1V251h-1ZM74 231h1V251h-1ZM77 231h1V251h-1ZM80 233h1V251h-1ZM83 232h1V251h-1ZM85 233h1V251h-1ZM88 232h1V251h-1ZM91 231h1V251h-1ZM94 231h1V251h-1ZM97 231h1V251h-1ZM100 232h1V251h-1ZM103 232h1V251h-1ZM105 232h1V251h-1ZM108 233h1V251h-1ZM111 232h1V251h-1ZM114 231h1V251h-1ZM117 231h1V251h-1ZM120 231h1V251h-1ZM123 231h1V251h-1ZM125 231h1V251h-1ZM128 232h1V251h-1ZM131 233h1V251h-1ZM134 231h1V251h-1ZM137 231h1V251h-1ZM140 231h1V251h-1ZM143 231h1V251h-1ZM146 233h1V251h-1ZM148 231h1V251h-1ZM151 233h1V251h-1ZM154 232h1V251h-1ZM157 233h1V251h-1ZM160 233h1V251h-1ZM163 232h1V251h-1ZM166 231h1V251h-1ZM168 233h1V251h-1ZM171 233h1V251h-1ZM174 231h1V251h-1ZM177 231h1V251h-1ZM180 233h1V251h-1ZM183 233h1V251h-1ZM186 233h1V251h-1ZM188 232h1V251h-1ZM191 232h1V251h-1ZM194 232h1V251h-1ZM197 233h1V251h-1ZM200 231h1V251h-1ZM203 231h1V251h-1ZM206 232h1V251h-1ZM208 231h1V251h-1ZM211 232h1V251h-1ZM214 232h1V251h-1ZM217 231h1V251h-1ZM220 231h1V251h-1ZM223 232h1V251h-1ZM226 232h1V251h-1ZM228 233h1V251h-1ZM231 232h1V251h-1ZM234 231h1V251h-1ZM237 231h1V251h-1ZM240 232h1V251h-1ZM243 232h1V251h-1ZM246 233h1V251h-1ZM248 231h1V251h-1ZM251 232h1V251h-1ZM254 233h1V251h-1ZM257 232h1V251h-1ZM260 232h1V251h-1ZM263 233h1V251h-1ZM266 233h1V251h-1ZM268 233h1V251h-1ZM271 231h1V251h-1ZM274 231h1V251h-1ZM277 233h1V251h-1ZM280 232h1V251h-1Z" fill="#a03490"/><path d="M2 231h1V251h-1ZM4 231h1V251h-1ZM7 230h1V251h-1ZM10 231h1V251h-1ZM13 230h1V251h-1ZM16 231h1V251h-1ZM19 230h1V251h-1ZM22 230h1V251h-1ZM24 232h1V251h-1ZM27 231h1V251h-1ZM30 230h1V251h-1ZM33 231h1V251h-1ZM36 231h1V251h-1ZM39 232h1V251h-1ZM42 231h1V251h-1ZM44 232h1V251h-1ZM47 230h1V251h-1ZM50 230h1V251h-1ZM53 232h1V251h-1ZM56 231h1V251h-1ZM59 231h1V251h-1ZM62 232h1V251h-1ZM64 230h1V251h-1ZM67 232h1V251h-1ZM70 231h1V251h-1ZM73 230h1V251h-1ZM76 230h1V251h-1ZM79 232h1V251h-1ZM82 231h1V251h-1ZM84 232h1V251h-1ZM87 231h1V251h-1ZM90 230h1V251h-1ZM93 230h1V251h-1ZM96 230h1V251h-1ZM99 231h1V251h-1ZM102 231h1V251h-1ZM104 231h1V251h-1ZM107 232h1V251h-1ZM110 231h1V251h-1ZM113 230h1V251h-1ZM116 230h1V251h-1ZM119 230h1V251h-1ZM122 230h1V251h-1ZM124 230h1V251h-1ZM127 231h1V251h-1ZM130 232h1V251h-1ZM133 230h1V251h-1ZM136 230h1V251h-1ZM139 230h1V251h-1ZM142 230h1V251h-1ZM145 232h1V251h-1ZM147 230h1V251h-1ZM150 232h1V251h-1ZM153 231h1V251h-1ZM156 232h1V251h-1ZM159 232h1V251h-1ZM162 231h1V251h-1ZM165 230h1V251h-1ZM167 232h1V251h-1ZM170 232h1V251h-1ZM173 230h1V251h-1ZM176 230h1V251h-1ZM179 232h1V251h-1ZM182 232h1V251h-1ZM185 232h1V251h-1ZM187 231h1V251h-1ZM190 231h1V251h-1ZM193 231h1V251h-1ZM196 232h1V251h-1ZM199 230h1V251h-1ZM202 230h1V251h-1ZM205 231h1V251h-1ZM207 230h1V251h-1ZM210 231h1V251h-1ZM213 231h1V251h-1ZM216 230h1V251h-1ZM219 230h1V251h-1ZM222 231h1V251h-1ZM225 231h1V251h-1ZM227 232h1V251h-1ZM230 231h1V251h-1ZM233 230h1V251h-1ZM236 230h1V251h-1ZM239 231h1V251h-1ZM242 231h1V251h-1ZM245 232h1V251h-1ZM247 230h1V251h-1ZM250 231h1V251h-1ZM253 232h1V251h-1ZM256 231h1V251h-1ZM259 231h1V251h-1ZM262 232h1V251h-1ZM265 232h1V251h-1ZM267 232h1V251h-1ZM270 230h1V251h-1ZM273 230h1V251h-1ZM276 232h1V251h-1ZM279 231h1V251h-1Z" fill="#4a0c4e"/></g><path d="M0 238.8H283M0 224.2H283M0 209.7H283M0 195.2H283M0 180.6H283M0 166.1H283M0 151.5H283" stroke="#404080" stroke-opacity="0.12" stroke-width="1" fill="none"/><path d="M1.2 0V251M0 1.2H283" stroke="#787878" stroke-width="2" fill="none"/></svg>
<div class="b" style="left:863px;top:414px;width:99px;height:35px;background:#fff;border:1px solid #e8e8e8;"></div>
<div class="b" style="left:865px;top:417px;width:15px;height:13px;background:#0000ee;border:1px solid #202040;"></div>
<div class="b" style="left:865px;top:433px;width:15px;height:12px;background:#ee0000;border:1px solid #402020;"></div>
<div class="t " style="left:882px;top:418px;">Tx:&nbsp;&nbsp;131.1 Mbps</div>
<div class="t " style="left:882px;top:433px;">Rx:&nbsp;&nbsp;19.9 Mbps</div>
<svg class="b" style="left:859px;top:461px" width="283" height="250" shape-rendering="auto"><rect x="0" y="0" width="283" height="250" fill="#fff"/><path d="M13.7 0V250M28.2 0V250M42.7 0V250M57.2 0V250M71.7 0V250M86.2 0V250M100.7 0V250M115.2 0V250M129.7 0V250M144.2 0V250M158.7 0V250M173.2 0V250M187.7 0V250M202.2 0V250M216.7 0V250M231.2 0V250M245.7 0V250M260.2 0V250M274.7 0V250M0 237.8H283M0 223.2H283M0 208.7H283M0 194.2H283M0 179.6H283M0 165.1H283M0 150.5H283M0 135.9H283M0 121.4H283M0 106.8H283M0 92.3H283M0 77.8H283M0 63.2H283M0 48.7H283M0 34.1H283M0 19.6H283M0 5.0H283" stroke="#d8d8d8" stroke-width="0.9" fill="none"/><g shape-rendering="crispEdges"><path d="M2 64H4V250H2ZM4 66H7V250H4ZM7 66H10V250H7ZM10 65H13V250H10ZM13 65H16V250H13ZM16 64H19V250H16ZM19 62H22V250H19ZM22 67H24V250H22ZM24 68H27V250H24ZM27 68H30V250H27ZM30 65H33V250H30ZM33 67H36V250H33ZM36 67H39V250H36ZM39 63H42V250H39ZM42 64H44V250H42ZM44 69H47V250H44ZM47 69H50V250H47ZM50 66H53V250H50ZM53 63H56V250H53ZM56 64H59V250H56ZM59 68H62V250H59ZM62 68H64V250H62ZM64 63H67V250H64ZM67 64H70V250H67ZM70 64H73V250H70ZM73 66H76V250H73ZM76 66H79V250H76ZM79 66H82V250H79ZM82 67H84V250H82ZM84 67H87V250H84ZM87 68H90V250H87ZM90 68H93V250H90ZM93 67H96V250H93ZM96 67H99V250H96ZM99 66H102V250H99ZM102 70H104V250H102ZM104 70H107V250H104ZM107 70H110V250H107ZM110 66H113V250H110ZM113 66H116V250H113ZM116 63H119V250H116ZM119 64H122V250H119ZM122 68H124V250H122ZM124 69H127V250H124ZM127 70H130V250H127ZM130 70H133V250H130ZM133 67H136V250H133ZM136 67H139V250H136ZM139 69H142V250H139ZM142 69H145V250H142ZM145 68H147V250H145ZM147 68H150V250H147ZM150 69H153V250H150ZM153 69H156V250H153ZM156 67H159V250H156ZM159 66H162V250H159ZM162 66H165V250H162ZM165 63H167V250H165ZM167 64H170V250H167ZM170 66H173V250H170ZM173 67H176V250H173ZM176 67H179V250H176ZM179 68H182V250H179ZM182 68H185V250H182ZM185 68H187V250H185ZM187 68H190V250H187ZM190 66H193V250H190ZM193 70H196V250H193ZM196 70H199V250H196ZM199 66H202V250H199ZM202 70H205V250H202ZM205 70H207V250H205ZM207 63H210V250H207ZM210 69H213V250H210ZM213 69H216V250H213ZM216 69H219V250H216ZM219 64H222V250H219ZM222 65H225V250H222ZM225 68H227V250H225ZM227 69H230V250H227ZM230 69H233V250H230ZM233 70H236V250H233ZM236 70H239V250H236ZM239 65H242V250H239ZM242 69H245V250H242ZM245 69H247V250H245ZM247 70H250V250H247ZM250 70H253V250H250ZM253 67H256V250H253ZM256 68H259V250H256ZM259 68H262V250H259ZM262 69H265V250H262ZM265 69H267V250H265ZM267 70H270V250H267ZM270 70H273V250H270ZM273 64H276V250H273ZM276 69H279V250H276ZM279 69H282V250H279Z" fill="#f4f4ff"/><path d="M3 63h1V250h-1ZM5 64h1V250h-1ZM8 66h1V250h-1ZM11 63h1V250h-1ZM14 65h1V250h-1ZM17 64h1V250h-1ZM20 62h1V250h-1ZM23 61h1V250h-1ZM25 67h1V250h-1ZM28 68h1V250h-1ZM31 65h1V250h-1ZM34 64h1V250h-1ZM37 67h1V250h-1ZM40 62h1V250h-1ZM43 63h1V250h-1ZM45 64h1V250h-1ZM48 69h1V250h-1ZM51 66h1V250h-1ZM54 63h1V250h-1ZM57 63h1V250h-1ZM60 64h1V250h-1ZM63 68h1V250h-1ZM65 63h1V250h-1ZM68 60h1V250h-1ZM71 64h1V250h-1ZM74 63h1V250h-1ZM77 66h1V250h-1ZM80 66h1V250h-1ZM83 65h1V250h-1ZM85 67h1V250h-1ZM88 62h1V250h-1ZM91 68h1V250h-1ZM94 63h1V250h-1ZM97 67h1V250h-1ZM100 64h1V250h-1ZM103 66h1V250h-1ZM105 70h1V250h-1ZM108 70h1V250h-1ZM111 62h1V250h-1ZM114 66h1V250h-1ZM117 62h1V250h-1ZM120 63h1V250h-1ZM123 64h1V250h-1ZM125 68h1V250h-1ZM128 69h1V250h-1ZM131 70h1V250h-1ZM134 63h1V250h-1ZM137 67h1V250h-1ZM140 63h1V250h-1ZM143 69h1V250h-1ZM146 67h1V250h-1ZM148 68h1V250h-1ZM151 63h1V250h-1ZM154 69h1V250h-1ZM157 67h1V250h-1ZM160 62h1V250h-1ZM163 66h1V250h-1ZM166 63h1V250h-1ZM168 63h1V250h-1ZM171 64h1V250h-1ZM174 66h1V250h-1ZM177 67h1V250h-1ZM180 65h1V250h-1ZM183 68h1V250h-1ZM186 59h1V250h-1ZM188 68h1V250h-1ZM191 66h1V250h-1ZM194 63h1V250h-1ZM197 70h1V250h-1ZM200 66h1V250h-1ZM203 66h1V250h-1ZM206 70h1V250h-1ZM208 63h1V250h-1ZM211 63h1V250h-1ZM214 69h1V250h-1ZM217 69h1V250h-1ZM220 62h1V250h-1ZM223 64h1V250h-1ZM226 65h1V250h-1ZM228 68h1V250h-1ZM231 69h1V250h-1ZM234 64h1V250h-1ZM237 70h1V250h-1ZM240 65h1V250h-1ZM243 63h1V250h-1ZM246 69h1V250h-1ZM248 66h1V250h-1ZM251 70h1V250h-1ZM254 67h1V250h-1ZM257 66h1V250h-1ZM260 68h1V250h-1ZM263 67h1V250h-1ZM266 69h1V250h-1ZM268 65h1V250h-1ZM271 70h1V250h-1ZM274 64h1V250h-1ZM277 63h1V250h-1ZM280 69h1V250h-1Z" fill="#b8b8f2"/><path d="M2 62h1V250h-1ZM4 63h1V250h-1ZM7 65h1V250h-1ZM10 62h1V250h-1ZM13 64h1V250h-1ZM16 63h1V250h-1ZM19 61h1V250h-1ZM22 60h1V250h-1ZM24 66h1V250h-1ZM27 67h1V250h-1ZM30 64h1V250h-1ZM33 63h1V250h-1ZM36 66h1V250h-1ZM39 61h1V250h-1ZM42 62h1V250h-1ZM44 63h1V250h-1ZM47 68h1V250h-1ZM50 65h1V250h-1ZM53 62h1V250h-1ZM56 62h1V250h-1ZM59 63h1V250h-1ZM62 67h1V250h-1ZM64 62h1V250h-1ZM67 59h1V250h-1ZM70 63h1V250h-1ZM73 62h1V250h-1ZM76 65h1V250h-1ZM79 65h1V250h-1ZM82 64h1V250h-1ZM84 66h1V250h-1ZM87 61h1V250h-1ZM90 67h1V250h-1ZM93 62h1V250h-1ZM96 66h1V250h-1ZM99 63h1V250h-1ZM102 65h1V250h-1ZM104 69h1V250h-1ZM107 69h1V250h-1ZM110 61h1V250h-1ZM113 65h1V250h-1ZM116 61h1V250h-1ZM119 62h1V250h-1ZM122 63h1V250h-1ZM124 67h1V250h-1ZM127 68h1V250h-1ZM130 69h1V250h-1ZM133 62h1V250h-1ZM136 66h1V250h-1ZM139 62h1V250h-1ZM142 68h1V250h-1ZM145 66h1V250h-1ZM147 67h1V250h-1ZM150 62h1V250h-1ZM153 68h1V250h-1ZM156 66h1V250h-1ZM159 61h1V250h-1ZM162 65h1V250h-1ZM165 62h1V250h-1ZM167 62h1V250h-1ZM170 63h1V250h-1ZM173 65h1V250h-1ZM176 66h1V250h-1ZM179 64h1V250h-1ZM182 67h1V250h-1ZM185 58h1V250h-1ZM187 67h1V250h-1ZM190 65h1V250h-1ZM193 62h1V250h-1ZM196 69h1V250h-1ZM199 65h1V250h-1ZM202 65h1V250h-1ZM205 69h1V250h-1ZM207 62h1V250h-1ZM210 62h1V250h-1ZM213 68h1V250h-1ZM216 68h1V250h-1ZM219 61h1V250h-1ZM222 63h1V250h-1ZM225 64h1V250h-1ZM227 67h1V250h-1ZM230 68h1V250h-1ZM233 63h1V250h-1ZM236 69h1V250h-1ZM239 64h1V250h-1ZM242 62h1V250h-1ZM245 68h1V250h-1ZM247 65h1V250h-1ZM250 69h1V250h-1ZM253 66h1V250h-1ZM256 65h1V250h-1ZM259 67h1V250h-1ZM262 66h1V250h-1ZM265 68h1V250h-1ZM267 64h1V250h-1ZM270 69h1V250h-1ZM273 63h1V250h-1ZM276 62h1V250h-1ZM279 68h1V250h-1Z" fill="#36367a"/><path d="M2 156H4V250H2ZM4 156H7V250H4ZM7 156H10V250H7ZM10 155H13V250H10ZM13 155H16V250H13ZM16 157H19V250H16ZM19 159H22V250H19ZM22 159H24V250H22ZM24 155H27V250H24ZM27 160H30V250H27ZM30 161H33V250H30ZM33 161H36V250H33ZM36 157H39V250H36ZM39 159H42V250H39ZM42 159H44V250H42ZM44 157H47V250H44ZM47 157H50V250H47ZM50 156H53V250H50ZM53 156H56V250H53ZM56 156H59V250H56ZM59 157H62V250H59ZM62 157H64V250H62ZM64 156H67V250H64ZM67 158H70V250H67ZM70 158H73V250H70ZM73 154H76V250H73ZM76 157H79V250H76ZM79 157H82V250H79ZM82 155H84V250H82ZM84 152H87V250H84ZM87 149H90V250H87ZM90 154H93V250H90ZM93 154H96V250H93ZM96 149H99V250H96ZM99 153H102V250H99ZM102 153H104V250H102ZM104 148H107V250H104ZM107 148H110V250H107ZM110 148H113V250H110ZM113 148H116V250H113ZM116 147H119V250H116ZM119 148H122V250H119ZM122 150H124V250H122ZM124 150H127V250H124ZM127 150H130V250H127ZM130 151H133V250H130ZM133 151H136V250H133ZM136 151H139V250H136ZM139 152H142V250H139ZM142 152H145V250H142ZM145 151H147V250H145ZM147 148H150V250H147ZM150 152H153V250H150ZM153 152H156V250H153ZM156 154H159V250H156ZM159 154H162V250H159ZM162 154H165V250H162ZM165 155H167V250H165ZM167 158H170V250H167ZM170 158H173V250H170ZM173 156H176V250H173ZM176 156H179V250H176ZM179 157H182V250H179ZM182 158H185V250H182ZM185 158H187V250H185ZM187 157H190V250H187ZM190 157H193V250H190ZM193 155H196V250H193ZM196 161H199V250H196ZM199 161H202V250H199ZM202 159H205V250H202ZM205 161H207V250H205ZM207 161H210V250H207ZM210 158H213V250H210ZM213 156H216V250H213ZM216 157H219V250H216ZM219 157H222V250H219ZM222 156H225V250H222ZM225 153H227V250H225ZM227 158H230V250H227ZM230 158H233V250H230ZM233 154H236V250H233ZM236 154H239V250H236ZM239 152H242V250H239ZM242 152H245V250H242ZM245 151H247V250H245ZM247 154H250V250H247ZM250 154H253V250H250ZM253 154H256V250H253ZM256 152H259V250H256ZM259 152H262V250H259ZM262 149H265V250H262ZM265 151H267V250H265ZM267 151H270V250H267ZM270 150H273V250H270ZM273 148H276V250H273ZM276 146H279V250H276ZM279 146H282V250H279Z" fill="#e494d8"/><path d="M3 156h1V250h-1ZM5 153h1V250h-1ZM8 156h1V250h-1ZM11 155h1V250h-1ZM14 154h1V250h-1ZM17 155h1V250h-1ZM20 157h1V250h-1ZM23 159h1V250h-1ZM25 154h1V250h-1ZM28 155h1V250h-1ZM31 160h1V250h-1ZM34 161h1V250h-1ZM37 155h1V250h-1ZM40 157h1V250h-1ZM43 159h1V250h-1ZM45 155h1V250h-1ZM48 157h1V250h-1ZM51 156h1V250h-1ZM54 156h1V250h-1ZM57 154h1V250h-1ZM60 156h1V250h-1ZM63 157h1V250h-1ZM65 153h1V250h-1ZM68 156h1V250h-1ZM71 158h1V250h-1ZM74 154h1V250h-1ZM77 154h1V250h-1ZM80 157h1V250h-1ZM83 155h1V250h-1ZM85 152h1V250h-1ZM88 149h1V250h-1ZM91 149h1V250h-1ZM94 154h1V250h-1ZM97 149h1V250h-1ZM100 148h1V250h-1ZM103 153h1V250h-1ZM105 147h1V250h-1ZM108 148h1V250h-1ZM111 148h1V250h-1ZM114 148h1V250h-1ZM117 145h1V250h-1ZM120 147h1V250h-1ZM123 148h1V250h-1ZM125 150h1V250h-1ZM128 147h1V250h-1ZM131 150h1V250h-1ZM134 151h1V250h-1ZM137 151h1V250h-1ZM140 149h1V250h-1ZM143 152h1V250h-1ZM146 151h1V250h-1ZM148 147h1V250h-1ZM151 148h1V250h-1ZM154 152h1V250h-1ZM157 152h1V250h-1ZM160 154h1V250h-1ZM163 154h1V250h-1ZM166 152h1V250h-1ZM168 155h1V250h-1ZM171 158h1V250h-1ZM174 155h1V250h-1ZM177 156h1V250h-1ZM180 154h1V250h-1ZM183 157h1V250h-1ZM186 158h1V250h-1ZM188 156h1V250h-1ZM191 157h1V250h-1ZM194 155h1V250h-1ZM197 154h1V250h-1ZM200 161h1V250h-1ZM203 156h1V250h-1ZM206 159h1V250h-1ZM208 161h1V250h-1ZM211 158h1V250h-1ZM214 156h1V250h-1ZM217 154h1V250h-1ZM220 157h1V250h-1ZM223 156h1V250h-1ZM226 153h1V250h-1ZM228 153h1V250h-1ZM231 158h1V250h-1ZM234 154h1V250h-1ZM237 154h1V250h-1ZM240 151h1V250h-1ZM243 152h1V250h-1ZM246 151h1V250h-1ZM248 151h1V250h-1ZM251 154h1V250h-1ZM254 154h1V250h-1ZM257 148h1V250h-1ZM260 152h1V250h-1ZM263 147h1V250h-1ZM266 149h1V250h-1ZM268 151h1V250h-1ZM271 150h1V250h-1ZM274 148h1V250h-1ZM277 146h1V250h-1ZM280 146h1V250h-1Z" fill="#a03490"/><path d="M2 155h1V250h-1ZM4 152h1V250h-1ZM7 155h1V250h-1ZM10 154h1V250h-1ZM13 153h1V250h-1ZM16 154h1V250h-1ZM19 156h1V250h-1ZM22 158h1V250h-1ZM24 153h1V250h-1ZM27 154h1V250h-1ZM30 159h1V250h-1ZM33 160h1V250h-1ZM36 154h1V250h-1ZM39 156h1V250h-1ZM42 158h1V250h-1ZM44 154h1V250h-1ZM47 156h1V250h-1ZM50 155h1V250h-1ZM53 155h1V250h-1ZM56 153h1V250h-1ZM59 155h1V250h-1ZM62 156h1V250h-1ZM64 152h1V250h-1ZM67 155h1V250h-1ZM70 157h1V250h-1ZM73 153h1V250h-1ZM76 153h1V250h-1ZM79 156h1V250h-1ZM82 154h1V250h-1ZM84 151h1V250h-1ZM87 148h1V250h-1ZM90 148h1V250h-1ZM93 153h1V250h-1ZM96 148h1V250h-1ZM99 147h1V250h-1ZM102 152h1V250h-1ZM104 146h1V250h-1ZM107 147h1V250h-1ZM110 147h1V250h-1ZM113 147h1V250h-1ZM116 144h1V250h-1ZM119 146h1V250h-1ZM122 147h1V250h-1ZM124 149h1V250h-1ZM127 146h1V250h-1ZM130 149h1V250h-1ZM133 150h1V250h-1ZM136 150h1V250h-1ZM139 148h1V250h-1ZM142 151h1V250h-1ZM145 150h1V250h-1ZM147 146h1V250h-1ZM150 147h1V250h-1ZM153 151h1V250h-1ZM156 151h1V250h-1ZM159 153h1V250h-1ZM162 153h1V250h-1ZM165 151h1V250h-1ZM167 154h1V250h-1ZM170 157h1V250h-1ZM173 154h1V250h-1ZM176 155h1V250h-1ZM179 153h1V250h-1ZM182 156h1V250h-1ZM185 157h1V250h-1ZM187 155h1V250h-1ZM190 156h1V250h-1ZM193 154h1V250h-1ZM196 153h1V250h-1ZM199 160h1V250h-1ZM202 155h1V250h-1ZM205 158h1V250h-1ZM207 160h1V250h-1ZM210 157h1V250h-1ZM213 155h1V250h-1ZM216 153h1V250h-1ZM219 156h1V250h-1ZM222 155h1V250h-1ZM225 152h1V250h-1ZM227 152h1V250h-1ZM230 157h1V250h-1ZM233 153h1V250h-1ZM236 153h1V250h-1ZM239 150h1V250h-1ZM242 151h1V250h-1ZM245 150h1V250h-1ZM247 150h1V250h-1ZM250 153h1V250h-1ZM253 153h1V250h-1ZM256 147h1V250h-1ZM259 151h1V250h-1ZM262 146h1V250h-1ZM265 148h1V250h-1ZM267 150h1V250h-1ZM270 149h1V250h-1ZM273 147h1V250h-1ZM276 145h1V250h-1ZM279 145h1V250h-1Z" fill="#4a0c4e"/></g><path d="M0 237.8H283M0 223.2H283M0 208.7H283M0 194.2H283M0 179.6H283M0 165.1H283M0 150.5H283M0 135.9H283M0 121.4H283M0 106.8H283M0 92.3H283M0 77.8H283" stroke="#404080" stroke-opacity="0.12" stroke-width="1" fill="none"/><path d="M1.2 0V250M0 1.2H283" stroke="#787878" stroke-width="2" fill="none"/></svg>
<div class="b" style="left:863px;top:672px;width:130px;height:36px;background:#fff;border:1px solid #e8e8e8;"></div>
<div class="b" style="left:865px;top:675px;width:15px;height:13px;background:#0000ee;border:1px solid #202040;"></div>
<div class="b" style="left:865px;top:691px;width:15px;height:12px;background:#ee0000;border:1px solid #402020;"></div>
<div class="t " style="left:882px;top:676px;">Tx Packet:&nbsp;&nbsp;12 574 p/s</div>
<div class="t " style="left:882px;top:691px;">Rx Packet:&nbsp;&nbsp;6 443 p/s</div>
<div class="b" style="left:851px;top:723px;width:420px;height:1px;background:#d0d0d0;"></div>
<div class="b" style="left:851px;top:724px;width:85px;height:19px;border-left:1px solid #c8c8c8;"></div>
<div class="t " style="left:854px;top:727px;">enabled</div>
<div class="b" style="left:937px;top:724px;width:84px;height:19px;border-left:1px solid #c8c8c8;"></div>
<div class="t " style="left:940px;top:727px;">running</div>
<div class="b" style="left:1022px;top:724px;width:85px;height:19px;border-left:1px solid #c8c8c8;"></div>
<div class="t " style="left:1025px;top:727px;">slave</div>
<div class="b" style="left:1108px;top:724px;width:72px;height:19px;border-left:1px solid #c8c8c8;"></div>
<div class="t " style="left:1111px;top:727px;">running ap</div>
<div class="b" style="left:1181px;top:724px;width:89px;height:19px;border-left:1px solid #c8c8c8;border-right:1px solid #c8c8c8;"></div>
</body></html>
